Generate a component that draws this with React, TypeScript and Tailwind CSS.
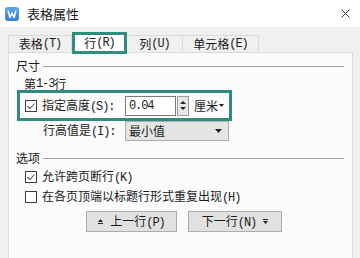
import React from 'react';

const TEAL = 'border-[#2f8c80]';

// CJK text with half-width monospace ASCII, like the dialog's SimSun labels
function Txt({ t }: { t: string }) {
    const parts = t.split(/([\x20-\x7e]+)/).filter(Boolean);
    return (
        <>
            {parts.map((p, i) =>
                /^[\x20-\x7e]+$/.test(p) ? (
                    <span key={i} className="font-['Liberation_Mono',monospace] text-[12px] tracking-[-1.1px]">{p}</span>
                ) : (
                    <span key={i}>{p}</span>
                )
            )}
        </>
    );
}

function CheckBox({ checked }: { checked?: boolean }) {
    return (
        <div className="w-[12px] h-[12px] border border-[#3c3c3c] bg-white shrink-0 flex items-center justify-center">
            {checked && (
                <svg width="10" height="10" viewBox="0 0 10 10">
                    <path d="M1.5 5 L4 7.5 L8.5 2.5" fill="none" stroke="#555" strokeWidth="1.1" />
                </svg>
            )}
        </div>
    );
}

function Tab({ label, active }: { label: string; active?: boolean }) {
    if (active) {
        return (
            <div className={`relative z-10 h-[22px] w-[55px] bg-white border-[3px] ${TEAL} flex items-center justify-center`}>
                <Txt t={label} />
            </div>
        );
    }
    return null;
}

function Section({ title }: { title: string }) {
    return (
        <div className="flex items-center h-[14px] pl-[7px] pr-[8px]">
            <span>{title}</span>
            <div className="flex-1 h-px bg-[#a0a0a0] ml-[3px]" />
        </div>
    );
}

function WpsIcon() {
    return (
        <svg width="14" height="14" viewBox="0 0 14 14">
            <defs>
                <linearGradient id="wg" x1="0" y1="0" x2="0" y2="1">
                    <stop offset="0" stopColor="#5aa8f0" />
                    <stop offset="1" stopColor="#2f7fd8" />
                </linearGradient>
            </defs>
            <rect x="0" y="0" width="14" height="14" rx="3" fill="url(#wg)" />
            <path d="M3 3.5 L5 10.5 L7 6 L9 10.5 L11 3.5" fill="none" stroke="#fff" strokeWidth="1.5" strokeLinejoin="round" />
        </svg>
    );
}

export default function App() {
    return (
        <div className="w-[360px] h-[258px] overflow-hidden bg-[#f0f0f0] text-[12px] leading-none text-[#1a1a1a] font-['Noto_Sans_CJK_SC',sans-serif]">
            {/* Title bar */}
            <div className="h-[27px] bg-white flex items-center">
                <div className="ml-[5px]"><WpsIcon /></div>
                <span className="ml-[8px] text-[13px]">表格属性</span>
                <svg className="ml-auto mr-[10px]" width="9" height="9" viewBox="0 0 9 9">
                    <path d="M0.5 0.5 L8.5 8.5 M8.5 0.5 L0.5 8.5" stroke="#333" strokeWidth="1" />
                </svg>
            </div>

            {/* Tabs */}
            <div className="mt-[5px] ml-[8px] flex items-end h-[22px]">
                <div className="h-[17px] mb-[2px] w-[64px] border border-b-0 border-[#d9d9d9] bg-[#f0f0f0] flex items-center justify-center">
                    <Txt t="表格(T)" />
                </div>
                <Tab label="行(R)" active />
                <div className="h-[17px] mb-[2px] w-[55px] border-t border-[#d9d9d9] bg-[#f0f0f0] flex items-center justify-center">
                    <Txt t="列(U)" />
                </div>
                <div className="h-[17px] mb-[2px] w-[77px] border border-b-0 border-[#d9d9d9] bg-[#f0f0f0] flex items-center justify-center">
                    <Txt t="单元格(E)" />
                </div>
            </div>

            {/* Panel */}
            <div className="-mt-[2px] ml-[8px] w-[345px] h-[220px] border border-[#d9d9d9] bg-[#fbfbfb]">
                <div className="mt-[6px]">
                    <Section title="尺寸" />
                </div>
                <div className="mt-[5px] ml-[15px] h-[12px] flex items-center">
                    <Txt t="第1-3行" />
                </div>

                {/* highlighted row */}
                <div className={`mt-[0px] ml-[8px] w-[215px] h-[31px] border-[3px] ${TEAL} flex items-center pl-[5px]`}>
                    <CheckBox checked />
                    <span className="ml-[5px] w-[83px]"><Txt t="指定高度(S):" /></span>
                    <div className="w-[51px] h-[20px] border border-[#7a7a7a] bg-white flex items-center pl-[3px]">
                        <Txt t="0.04" />
                    </div>
                    <div className="ml-[1px] w-[12px] h-[20px] border border-[#9a9a9a] bg-[#e6e6e6] flex flex-col items-center justify-center gap-[3px]">
                        <svg width="6" height="3" viewBox="0 0 6 3"><path d="M0 3 L3 0 L6 3 Z" fill="#222" /></svg>
                        <svg width="6" height="3" viewBox="0 0 6 3"><path d="M0 0 L3 3 L6 0 Z" fill="#222" /></svg>
                    </div>
                    <span className="ml-[5px]">厘米</span>
                    <svg className="ml-[1px]" width="5" height="3" viewBox="0 0 5 3"><path d="M0 0 L2.5 3 L5 0 Z" fill="#222" /></svg>
                </div>

                <div className="ml-[34px] h-[20px] flex items-center">
                    <span className="w-[82px]"><Txt t="行高值是(I):" /></span>
                    <div className="w-[104px] h-[20px] border border-[#adadad] bg-[#e5e5e5] flex items-center pl-[3px] pr-[6px]">
                        <span>最小值</span>
                        <svg className="ml-auto" width="7" height="4" viewBox="0 0 7 4"><path d="M0 0 L3.5 4 L7 0 Z" fill="#222" /></svg>
                    </div>
                </div>

                <div className="mt-[10px]">
                    <Section title="选项" />
                </div>
                <div className="mt-[5px] ml-[16px] h-[14px] flex items-center">
                    <CheckBox checked />
                    <span className="ml-[5px]"><Txt t="允许跨页断行(K)" /></span>
                </div>
                <div className="mt-[6px] ml-[16px] h-[14px] flex items-center">
                    <CheckBox />
                    <span className="ml-[5px]"><Txt t="在各页顶端以标题行形式重复出现(H)" /></span>
                </div>

                <div className="mt-[7px] ml-[77px] flex gap-[11px]">
                    <button className="w-[91px] h-[21px] border border-[#adadad] bg-[#e1e1e1] flex items-center justify-center">
                        <svg width="5" height="5" viewBox="0 0 5 5"><path d="M0 3 L2.5 0 L5 3 Z M0 4 H5 V5 H0 Z" fill="#222" /></svg>
                        <span className="ml-[7px]"><Txt t="上一行(P)" /></span>
                    </button>
                    <button className="w-[94px] h-[21px] border border-[#adadad] bg-[#e1e1e1] flex items-center justify-center">
                        <span><Txt t="下一行(N)" /></span>
                        <svg className="ml-[7px]" width="5" height="5" viewBox="0 0 5 5"><path d="M0 0 H5 V1 H0 Z M0 2 L2.5 5 L5 2 Z" fill="#222" /></svg>
                    </button>
                </div>
            </div>
        </div>
    );
}
